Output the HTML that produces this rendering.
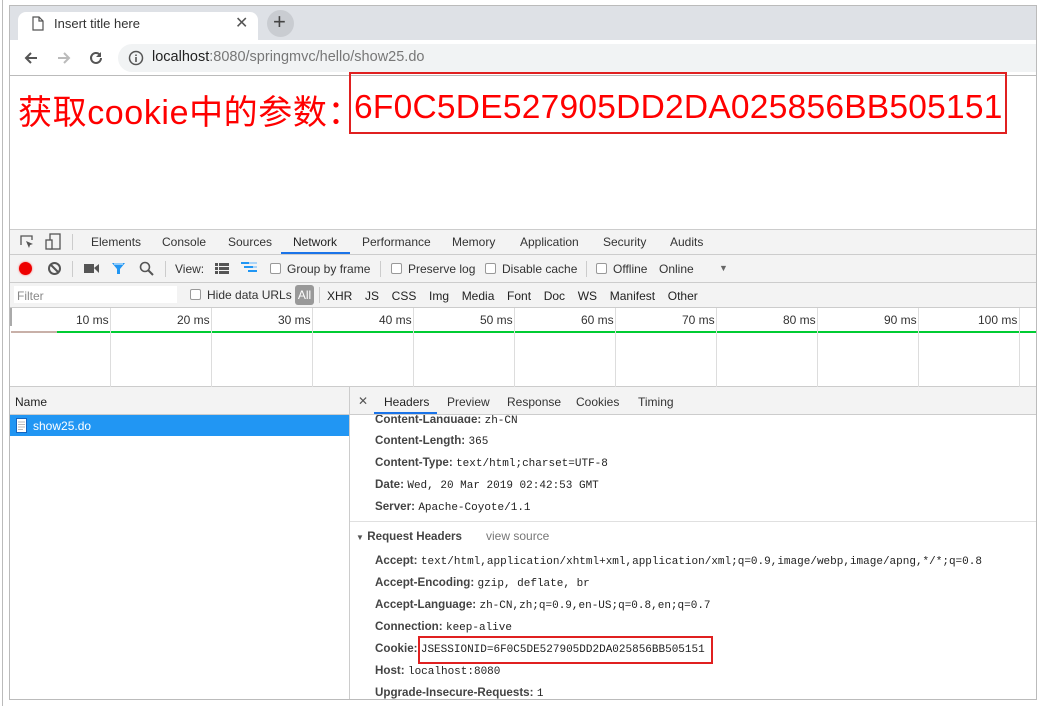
<!DOCTYPE html>
<html><head><meta charset="utf-8"><style>
*{margin:0;padding:0;box-sizing:border-box}
body{width:1044px;height:706px;background:#fff;position:relative;overflow:hidden;font-family:"Liberation Sans","Noto Sans CJK SC",sans-serif;font-size:12px;color:#333}
.a{position:absolute;white-space:nowrap}
.ui{font-family:"Liberation Sans","Noto Sans CJK SC",sans-serif;font-size:12px;color:#333}
.mono{font-family:"Liberation Mono",monospace;font-size:11px;color:#222}
.hl{font-weight:bold;color:#444;font-size:11.6px}
.cb{display:inline-block;width:11px;height:11px;border:1px solid #999;border-radius:2px;background:#fff;vertical-align:-1px;margin-right:6px}
.vl{position:absolute;width:1px;background:#ddd}
.hline{position:absolute;height:1px;background:#ccc}
</style></head><body>
<div class="a" style="left:2px;top:0;width:1px;height:706px;background:#bbb"></div>
<div class="a" style="left:9px;top:5px;width:1028px;height:695px;border:1px solid #bbb"></div>
<div class="a" style="left:10px;top:6px;width:1026px;height:34px;background:#dee1e6"></div>
<div class="a" style="left:18px;top:12px;width:240px;height:29px;background:#fff;border-radius:8px 8px 0 0"></div>
<svg class="a" style="left:32px;top:16px" width="12" height="15" viewBox="0 0 12 15"><path d="M1 1h6l4 4v9H1z M7 1v4h4" fill="none" stroke="#555" stroke-width="1.2"/></svg>
<div class="a ui" style="left:54px;top:16px;font-size:13px;color:#333">Insert title here</div>
<div class="a" style="left:235px;top:13px;font-size:16px;color:#555">✕</div>
<div class="a" style="left:267px;top:10px;width:27px;height:27px;border-radius:50%;background:#c9ccd1"></div>
<div class="a" style="left:273px;top:9px;font-size:22px;color:#444">+</div>
<div class="a" style="left:10px;top:40px;width:1026px;height:36px;background:#fff;border-bottom:1px solid #bbb"></div>
<svg class="a" style="left:23px;top:50px" width="16" height="16" viewBox="0 0 16 16"><path d="M14 8H3M8 3L3 8l5 5" fill="none" stroke="#555" stroke-width="2"/></svg>
<svg class="a" style="left:56px;top:50px" width="16" height="16" viewBox="0 0 16 16"><path d="M2 8h11M8 3l5 5-5 5" fill="none" stroke="#bbb" stroke-width="2"/></svg>
<svg class="a" style="left:88px;top:50px" width="16" height="16" viewBox="0 0 16 16"><path d="M13 8a5 5 0 1 1-1.5-3.6" fill="none" stroke="#555" stroke-width="2"/><path d="M13 2v5H8z" fill="#555"/></svg>
<div class="a" style="left:118px;top:44px;width:918px;height:28px;background:#f1f3f4;border-radius:14px 0 0 14px"></div>
<svg class="a" style="left:128px;top:50px" width="16" height="16" viewBox="0 0 16 16"><circle cx="8" cy="8" r="6.5" fill="none" stroke="#555" stroke-width="1.5"/><path d="M8 7v5M8 4.5v1.5" stroke="#555" stroke-width="1.6"/></svg>
<div class="a ui" style="left:152px;top:49px;font-size:14.5px;color:#222">localhost<span style="color:#777">:8080/springmvc/hello/show25.do</span></div>
<div class="a" style="left:18px;top:85px;font-size:34px;letter-spacing:0.6px;color:#f00;font-family:'Liberation Sans','Noto Sans CJK SC',sans-serif">获取cookie中的参数：</div>
<div class="a" style="left:349px;top:72px;width:658px;height:62px;border:2px solid #e02020"></div>
<div class="a" style="left:354px;top:89px;font-size:33.5px;color:#f00;letter-spacing:0.25px">6F0C5DE527905DD2DA025856BB505151</div>
<div class="a" style="left:10px;top:229px;width:1026px;height:470px;background:#f3f3f3;border-top:1px solid #ccc"></div>
<div class="hline" style="left:10px;top:254px;width:1026px"></div>
<svg class="a" style="left:19px;top:234px" width="16" height="16" viewBox="0 0 16 16"><path d="M2 11V2h11v4" fill="none" stroke="#555" stroke-width="1.3"/><path d="M7 7l7 3-3 1-1 3z" fill="#555"/></svg>
<svg class="a" style="left:45px;top:233px" width="16" height="17" viewBox="0 0 16 17"><rect x="5" y="1" width="10" height="15" fill="none" stroke="#555" stroke-width="1.3"/><rect x="1" y="7" width="6" height="9" fill="#f3f3f3" stroke="#555" stroke-width="1.3"/></svg>
<div class="vl" style="left:72px;top:234px;height:16px;background:#ccc"></div>
<div class="a ui" style="left:91px;top:235px">Elements</div>
<div class="a ui" style="left:162px;top:235px">Console</div>
<div class="a ui" style="left:228px;top:235px">Sources</div>
<div class="a ui" style="left:293px;top:235px;color:#222">Network</div>
<div class="a" style="left:281px;top:252px;width:69px;height:2px;background:#1a73e8"></div>
<div class="a ui" style="left:362px;top:235px">Performance</div>
<div class="a ui" style="left:452px;top:235px">Memory</div>
<div class="a ui" style="left:520px;top:235px">Application</div>
<div class="a ui" style="left:603px;top:235px">Security</div>
<div class="a ui" style="left:670px;top:235px">Audits</div>
<div class="hline" style="left:10px;top:282px;width:1026px"></div>
<div class="a" style="left:19px;top:262px;width:13px;height:13px;border-radius:50%;background:#e00;box-shadow:0 0 2px #f66"></div>
<svg class="a" style="left:47px;top:261px" width="15" height="15" viewBox="0 0 15 15"><circle cx="7.5" cy="7.5" r="5.5" fill="none" stroke="#555" stroke-width="2"/><path d="M3.5 3.5l8 8" stroke="#555" stroke-width="2"/></svg>
<div class="vl" style="left:72px;top:261px;height:16px;background:#ccc"></div>
<svg class="a" style="left:84px;top:263px" width="16" height="11" viewBox="0 0 16 11"><rect x="0" y="1" width="10" height="9" fill="#555"/><path d="M10 5l5-4v9z" fill="#555"/></svg>
<svg class="a" style="left:111px;top:262px" width="15" height="13" viewBox="0 0 15 13"><path d="M1 1h13L9 7v5H6V7z" fill="#2196f3"/><path d="M3 2h9" stroke="#fff" stroke-width="1"/></svg>
<svg class="a" style="left:139px;top:261px" width="15" height="15" viewBox="0 0 15 15"><circle cx="6" cy="6" r="4.5" fill="none" stroke="#555" stroke-width="1.6"/><path d="M9.5 9.5l4.5 4.5" stroke="#555" stroke-width="2"/></svg>
<div class="vl" style="left:165px;top:261px;height:16px;background:#ccc"></div>
<div class="a ui" style="left:175px;top:262px">View:</div>
<svg class="a" style="left:215px;top:263px" width="14" height="11" viewBox="0 0 14 11"><path d="M0 0h3v3H0zM4 0h10v3H4zM0 4h3v3H0zM4 4h10v3H4zM0 8h3v3H0zM4 8h10v3H4z" fill="#555"/></svg>
<svg class="a" style="left:241px;top:262px" width="17" height="12" viewBox="0 0 17 12"><path d="M0 1h8M3 5h9M7 9h9" stroke="#2196f3" stroke-width="2"/><path d="M8 1h8M12 5h4" stroke="#aad4f8" stroke-width="2"/></svg>
<div class="a ui" style="left:270px;top:262px"><span class="cb"></span>Group by frame</div>
<div class="vl" style="left:380px;top:261px;height:16px;background:#ccc"></div>
<div class="a ui" style="left:391px;top:262px"><span class="cb"></span>Preserve log</div>
<div class="a ui" style="left:485px;top:262px"><span class="cb"></span>Disable cache</div>
<div class="vl" style="left:586px;top:261px;height:16px;background:#ccc"></div>
<div class="a ui" style="left:596px;top:262px"><span class="cb"></span>Offline</div>
<div class="a ui" style="left:659px;top:262px">Online</div>
<div class="a" style="left:719px;top:263px;font-size:9px;color:#666">▼</div>
<div class="hline" style="left:10px;top:307px;width:1026px"></div>
<div class="a" style="left:14px;top:286px;width:163px;height:17px;background:#fff"></div>
<div class="a ui" style="left:17px;top:289px;color:#888">Filter</div>
<div class="a ui" style="left:190px;top:288px"><span class="cb"></span>Hide data URLs</div>
<div class="a" style="left:295px;top:285px;width:19px;height:20px;background:#999;border-radius:3px;color:#fff;font-size:12px;text-align:center;line-height:20px">All</div>
<div class="vl" style="left:319px;top:287px;height:16px;background:#ccc"></div>
<div class="a ui" style="left:327px;top:289px;color:#222;word-spacing:3px">XHR&nbsp; JS&nbsp; CSS&nbsp; Img&nbsp; Media&nbsp; Font&nbsp; Doc&nbsp; WS&nbsp; Manifest&nbsp; Other</div>
<div class="a" style="left:10px;top:308px;width:1026px;height:79px;background:#fff;border-bottom:1px solid #ccc"></div>
<div class="a" style="left:10px;top:308px;width:2px;height:18px;background:#aaa"></div>
<div class="a" style="left:11px;top:331px;width:46px;height:2px;background:#c8b0a8"></div>
<div class="a" style="left:57px;top:331px;width:979px;height:2px;background:#0c3"></div>
<div class="vl" style="left:110px;top:308px;height:79px"></div>
<div class="vl" style="left:211px;top:308px;height:79px"></div>
<div class="vl" style="left:312px;top:308px;height:79px"></div>
<div class="vl" style="left:413px;top:308px;height:79px"></div>
<div class="vl" style="left:514px;top:308px;height:79px"></div>
<div class="vl" style="left:615px;top:308px;height:79px"></div>
<div class="vl" style="left:716px;top:308px;height:79px"></div>
<div class="vl" style="left:817px;top:308px;height:79px"></div>
<div class="vl" style="left:918px;top:308px;height:79px"></div>
<div class="vl" style="left:1019px;top:308px;height:79px"></div>
<div class="a ui" style="left:76px;top:313px">10 ms</div>
<div class="a ui" style="left:177px;top:313px">20 ms</div>
<div class="a ui" style="left:278px;top:313px">30 ms</div>
<div class="a ui" style="left:379px;top:313px">40 ms</div>
<div class="a ui" style="left:480px;top:313px">50 ms</div>
<div class="a ui" style="left:581px;top:313px">60 ms</div>
<div class="a ui" style="left:682px;top:313px">70 ms</div>
<div class="a ui" style="left:783px;top:313px">80 ms</div>
<div class="a ui" style="left:884px;top:313px">90 ms</div>
<div class="a ui" style="left:978px;top:313px">100 ms</div>
<div class="hline" style="left:10px;top:414px;width:1026px"></div>
<div class="a ui" style="left:15px;top:395px;color:#222">Name</div>
<div class="a" style="left:10px;top:415px;width:339px;height:284px;background:#fff"></div>
<div class="a" style="left:10px;top:415px;width:339px;height:21px;background:#2196f3"></div>
<svg class="a" style="left:16px;top:418px" width="11" height="15" viewBox="0 0 11 15"><rect x="0.5" y="0.5" width="10" height="14" fill="#fff" stroke="#1565c0"/><path d="M2 4h7M2 6.5h7M2 9h7M2 11.5h5" stroke="#bbb"/></svg>
<div class="a ui" style="left:33px;top:419px;color:#fff">show25.do</div>
<div class="vl" style="left:349px;top:387px;height:312px;background:#ccc"></div>
<div class="a" style="left:350px;top:415px;width:686px;height:284px;background:#fff"></div>
<div class="a" style="left:358px;top:394px;font-size:12px;color:#555">✕</div>
<div class="a ui" style="left:384px;top:395px;color:#222">Headers</div>
<div class="a" style="left:374px;top:412px;width:63px;height:2px;background:#1a73e8"></div>
<div class="a ui" style="left:447px;top:395px">Preview</div>
<div class="a ui" style="left:507px;top:395px">Response</div>
<div class="a ui" style="left:576px;top:395px">Cookies</div>
<div class="a ui" style="left:638px;top:395px">Timing</div>
<div class="a" style="left:375px;top:415px;height:8px;overflow:hidden;width:200px"><div style="position:relative;top:-3px" class="ui"><span class="hl">Content-Language:</span> <span class="mono">zh-CN</span></div></div>
<div class="a ui" style="left:375px;top:433px"><span class="hl">Content-Length:</span> <span class="mono">365</span></div>
<div class="a ui" style="left:375px;top:455px"><span class="hl">Content-Type:</span> <span class="mono">text/html;charset=UTF-8</span></div>
<div class="a ui" style="left:375px;top:477px"><span class="hl">Date:</span> <span class="mono">Wed, 20 Mar 2019 02:42:53 GMT</span></div>
<div class="a ui" style="left:375px;top:499px"><span class="hl">Server:</span> <span class="mono">Apache-Coyote/1.1</span></div>
<div class="a" style="left:350px;top:521px;width:686px;height:1px;background:#e0e0e0"></div>
<div class="a ui" style="left:356px;top:529px"><span style="font-size:8px;color:#555">▼</span> <span class="hl">Request Headers</span><span style="color:#777;margin-left:24px">view source</span></div>
<div class="a ui" style="left:375px;top:553px"><span class="hl">Accept:</span> <span class="mono">text/html,application/xhtml+xml,application/xml;q=0.9,image/webp,image/apng,*/*;q=0.8</span></div>
<div class="a ui" style="left:375px;top:575px"><span class="hl">Accept-Encoding:</span> <span class="mono">gzip, deflate, br</span></div>
<div class="a ui" style="left:375px;top:597px"><span class="hl">Accept-Language:</span> <span class="mono">zh-CN,zh;q=0.9,en-US;q=0.8,en;q=0.7</span></div>
<div class="a ui" style="left:375px;top:619px"><span class="hl">Connection:</span> <span class="mono">keep-alive</span></div>
<div class="a ui" style="left:375px;top:641px"><span class="hl">Cookie:</span> <span class="mono">JSESSIONID=6F0C5DE527905DD2DA025856BB505151</span></div>
<div class="a" style="left:418px;top:636px;width:295px;height:28px;border:2px solid #e02020"></div>
<div class="a ui" style="left:375px;top:663px"><span class="hl">Host:</span> <span class="mono">localhost:8080</span></div>
<div class="a ui" style="left:375px;top:685px"><span class="hl">Upgrade-Insecure-Requests:</span> <span class="mono">1</span></div>
<div class="a" style="left:9px;top:699px;width:1028px;height:1px;background:#bbb"></div>
<div class="a" style="left:0;top:700px;width:1044px;height:6px;background:#fff"></div>
<div class="a" style="left:2px;top:700px;width:1px;height:6px;background:#bbb"></div>
</body></html>
